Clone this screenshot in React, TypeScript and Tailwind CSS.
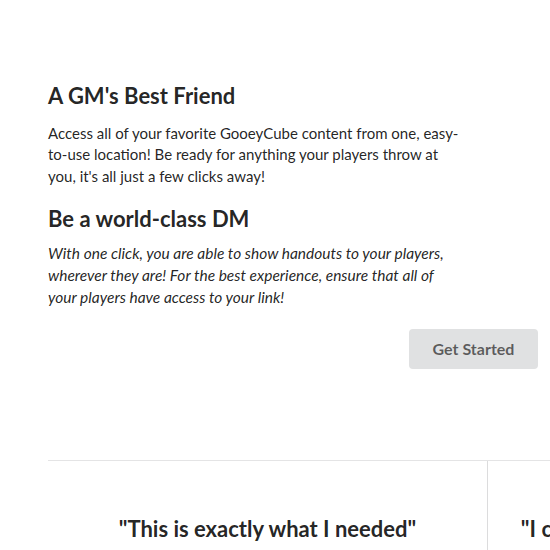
export default function App() {
  return (
    <div className="w-[550px] h-[550px] overflow-hidden bg-white font-['Lato','Noto_Sans',sans-serif] text-[rgba(0,0,0,0.87)]">
      <section className="pt-[80px] pb-[91px]">
        <div className="ml-[48px] w-[490px]">
          <div className="w-[420px]">
            <h3 className="text-[22px] font-bold leading-[31px]">A GM's Best Friend</h3>
            <p className="mt-[12px] text-[15px] leading-[1.4285]">
              Access all of your favorite GooeyCube content from one, easy-to-use location! Be ready for
              anything your players throw at you, it's all just a few clicks away!
            </p>
            <h3 className="mt-[16px] text-[22px] font-bold leading-[31px]">Be a world-class DM</h3>
            <p className="mt-[8px] w-[405px] text-[15.5px] italic leading-[22px]">
              With one click, you are able to show handouts to your players, wherever they are! For the
              best experience, ensure that all of your players have access to your link!
            </p>
          </div>
          <div className="mt-[21px] flex justify-end">
            <button className="h-[40px] w-[129px] rounded-[4px] bg-[#e0e1e2] text-[16px] font-bold text-[rgba(0,0,0,0.6)]">
              Get Started
            </button>
          </div>
        </div>
      </section>
      <div className="ml-[48px] flex w-[1000px] border-t border-[#e4e4e5]">
        <div className="w-[440px] shrink-0 border-r border-[#dcdcdd] pt-[52px] pb-[60px] text-center">
          <h3 className="text-[22px] font-bold leading-[31px]">"This is exactly what I needed"</h3>
        </div>
        <div className="w-[440px] shrink-0 pt-[52px] pb-[60px] text-center">
          <h3 className="text-[22px] font-bold leading-[31px]">"I can't imagine a campaign without it"</h3>
        </div>
      </div>
    </div>
  );
}
